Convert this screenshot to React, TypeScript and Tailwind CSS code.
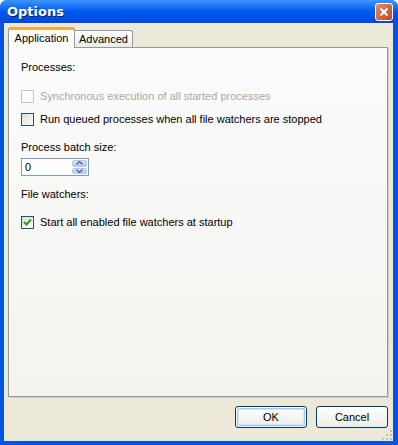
import React from 'react';

const font = { fontFamily: '"Liberation Sans", Arial, sans-serif' };

function CheckBox({ checked, disabled }: { checked?: boolean; disabled?: boolean }) {
  return (
    <div
      className={`w-[13px] h-[13px] shrink-0 border flex items-center justify-center ${
        disabled
          ? 'border-[#cac8bb] bg-white'
          : 'border-[#1c5180] bg-gradient-to-br from-[#dcdcd7] to-white'
      }`}
    >
      {checked && (
        <svg width="9" height="9" viewBox="0 0 9 9">
          <path d="M1 4 L3.5 6.5 L8 1.5" fill="none" stroke="#21a121" strokeWidth="2" />
        </svg>
      )}
    </div>
  );
}

function CheckRow({ label, checked, disabled }: { label: string; checked?: boolean; disabled?: boolean }) {
  return (
    <div className="flex items-center gap-[6px] h-[13px]">
      <CheckBox checked={checked} disabled={disabled} />
      <span className={disabled ? 'text-[#aca899]' : 'text-black'}>{label}</span>
    </div>
  );
}

function XpButton({ label, isDefault }: { label: string; isDefault?: boolean }) {
  return (
    <button
      className="w-[72px] h-[22px] rounded-[3px] border border-[#003c74] bg-gradient-to-b from-white to-[#ecebe6] text-black text-[11px] leading-none p-[1px]"
      style={font}
    >
      <div
        className={`w-full h-full rounded-[2px] flex items-center justify-center ${
          isDefault ? 'border border-[#a8c6f6] shadow-[inset_0_0_0_1px_#cee7ff]' : ''
        }`}
      >
        {label}
      </div>
    </button>
  );
}

export default function App() {
  return (
    <div
      className="w-[398px] h-[445px] flex flex-col bg-[#0055e5] rounded-t-[7px] overflow-hidden text-[11px] leading-[13px]"
      style={font}
    >
      {/* title bar */}
      <div className="h-[23px] shrink-0 flex items-center justify-between pl-[7px] pr-[5px] bg-gradient-to-b from-[#3d95ff] via-[#0058ee] to-[#0049d8]">
        <span
          className="text-white font-bold text-[13px] [text-shadow:1px_1px_#0a1e6a]"
          style={{ fontFamily: '"DejaVu Sans", sans-serif' }}
        >
          Options
        </span>
        <div className="w-[18px] h-[18px] rounded-[3px] border border-white bg-gradient-to-br from-[#e88d68] to-[#c2401b] flex items-center justify-center">
          <svg width="10" height="10" viewBox="0 0 10 10">
            <path d="M1.5 1.5 L8.5 8.5 M8.5 1.5 L1.5 8.5" stroke="white" strokeWidth="2" />
          </svg>
        </div>
      </div>

      {/* body */}
      <div className="flex-1 ml-[4px] mr-[5px] mb-[4px] bg-[#ece9d8] flex flex-col pl-[4px] pr-[5px] pt-[4px] relative">
        {/* tabs */}
        <div className="flex items-end h-[20px] relative z-10">
          <div className="h-[21px] w-[67px] bg-white border-x border-[#919b9c] border-t-[3px] border-t-[#f7a53c] rounded-t-[3px] flex justify-center pt-[2px] -mb-[1px] whitespace-nowrap">
            Application
          </div>
          <div className="h-[17px] w-[58px] bg-gradient-to-b from-white to-[#ecebe6] border-t border-r border-[#919b9c] rounded-tr-[3px] flex justify-center pt-[2px] whitespace-nowrap">
            Advanced
          </div>
        </div>

        {/* panel */}
        <div className="h-[350px] border border-[#919b9c] shadow-[1px_1px_0_#d0cdbf] bg-gradient-to-b from-[#fcfcfe] to-[#f4f3ee] pl-[12px] pt-[13px] flex flex-col">
          <div>Processes:</div>
          <div className="mt-[16px]">
            <CheckRow label="Synchronous execution of all started processes" disabled />
          </div>
          <div className="mt-[10px]">
            <CheckRow label="Run queued processes when all file watchers are stopped" />
          </div>
          <div className="mt-[15px]">Process batch size:</div>
          <div className="mt-[4px] w-[68px] h-[18px] border border-[#7f9db9] bg-white flex items-center justify-between pl-[3px] pr-[1px]">
            <span>0</span>
            <div className="w-[15px] h-[14px] flex flex-col gap-[1px]">
              {[0, 1].map((i) => (
                <div
                  key={i}
                  className="flex-1 rounded-[2px] bg-gradient-to-b from-[#d5e1fb] to-[#b4c8f6] border border-[#b5c8f1] flex items-center justify-center"
                >
                  <svg width="7" height="4" viewBox="0 0 7 4">
                    <path
                      d={i === 0 ? 'M0.5 3.5 L3.5 0.5 L6.5 3.5' : 'M0.5 0.5 L3.5 3.5 L6.5 0.5'}
                      fill="none"
                      stroke="#4d6185"
                      strokeWidth="1.3"
                    />
                  </svg>
                </div>
              ))}
            </div>
          </div>
          <div className="mt-[12px]">File watchers:</div>
          <div className="mt-[15px]">
            <CheckRow label="Start all enabled file watchers at startup" checked />
          </div>
        </div>

        {/* buttons */}
        <div className="flex justify-end gap-[9px] mt-[9px]">
          <XpButton label="OK" isDefault />
          <XpButton label="Cancel" />
        </div>

        {/* grip */}
        <svg className="absolute right-[1px] bottom-[1px]" width="10" height="10" viewBox="0 0 10 10">
          {[
            [8, 0], [8, 4], [4, 4], [8, 8], [4, 8], [0, 8],
          ].map(([x, y], i) => (
            <rect key={i} x={x} y={y} width="2" height="2" fill="#c5c2b2" />
          ))}
        </svg>
      </div>
    </div>
  );
}
